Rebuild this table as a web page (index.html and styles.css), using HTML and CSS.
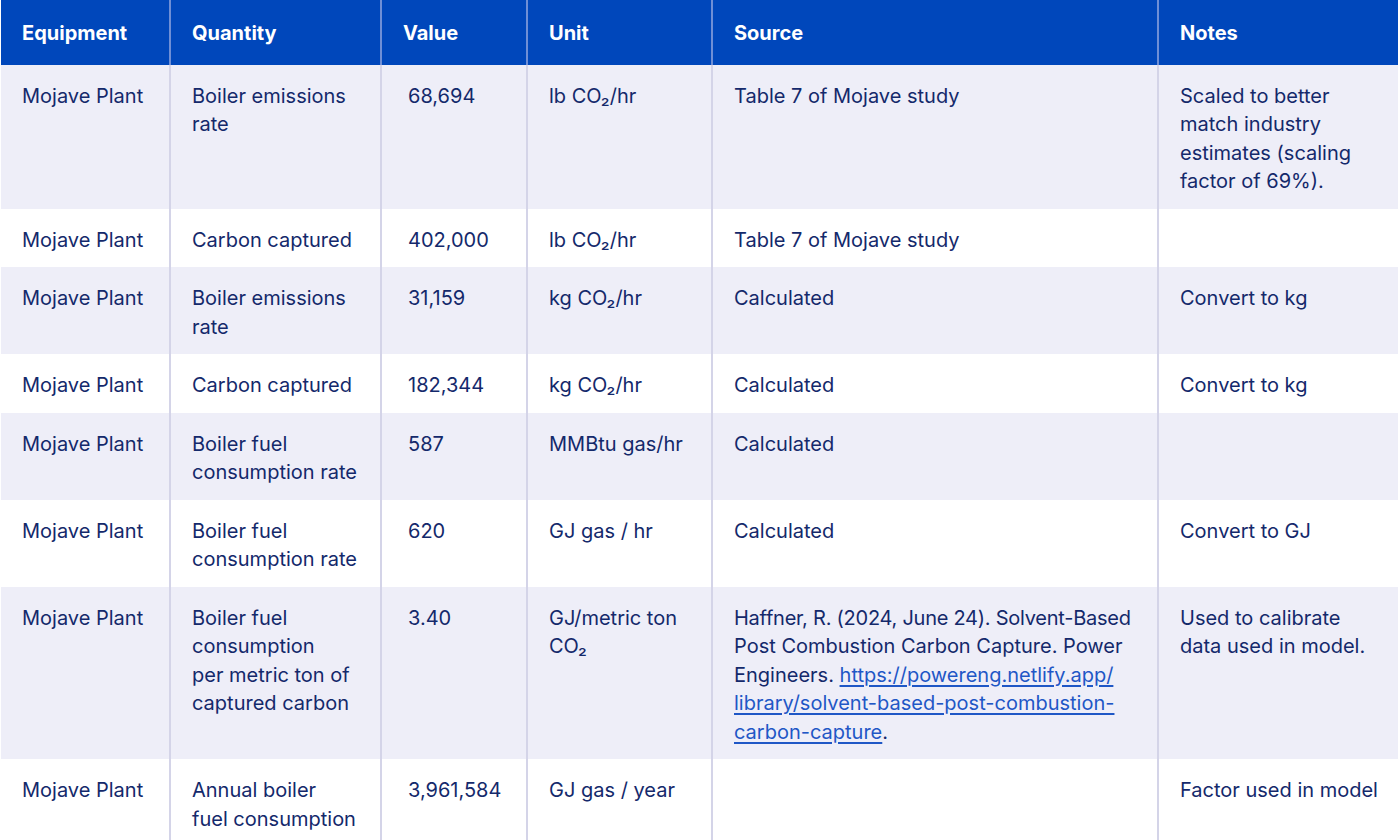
FILE: index.html
```html
<!DOCTYPE html>
<html lang="en">
<head>
<meta charset="utf-8">
<title>Mojave Plant data</title>
<link rel="stylesheet" href="styles.css">
</head>
<body>
<div class="wrap">
<table class="data">
  <colgroup>
    <col class="c1"><col class="c2"><col class="c3"><col class="c4"><col class="c5"><col class="c6">
  </colgroup>
  <thead>
    <tr><th>Equipment</th><th>Quantity</th><th>Value</th><th>Unit</th><th>Source</th><th>Notes</th></tr>
  </thead>
  <tbody>
    <tr class="alt"><td>Mojave Plant</td><td>Boiler emissions rate</td><td class="num">68,694</td><td>lb CO₂/hr</td><td>Table 7 of Mojave study</td><td>Scaled to better match industry estimates (scaling factor of 69%).</td></tr>
    <tr><td>Mojave Plant</td><td>Carbon captured</td><td class="num">402,000</td><td>lb CO₂/hr</td><td>Table 7 of Mojave study</td><td></td></tr>
    <tr class="alt"><td>Mojave Plant</td><td>Boiler emissions rate</td><td class="num">31,159</td><td>kg CO₂/hr</td><td>Calculated</td><td>Convert to kg</td></tr>
    <tr><td>Mojave Plant</td><td>Carbon captured</td><td class="num">182,344</td><td>kg CO₂/hr</td><td>Calculated</td><td>Convert to kg</td></tr>
    <tr class="alt"><td>Mojave Plant</td><td>Boiler fuel consumption rate</td><td class="num">587</td><td>MMBtu gas/hr</td><td>Calculated</td><td></td></tr>
    <tr><td>Mojave Plant</td><td>Boiler fuel consumption rate</td><td class="num">620</td><td>GJ gas / hr</td><td>Calculated</td><td>Convert to GJ</td></tr>
    <tr class="alt"><td>Mojave Plant</td><td>Boiler fuel consumption<br>per metric ton of captured carbon</td><td class="num">3.40</td><td>GJ/metric ton CO₂</td><td class="cite"><span class="ln">Haffner, R. (2024, June 24). Solvent-Based</span><br><span class="ln">Post Combustion Carbon Capture. Power</span><br><span class="ln">Engineers. <a href="#">https://powereng.netlify.app/</a></span><br><span class="ln"><a href="#">library/solvent-based-post-combustion-</a></span><br><span class="ln"><a href="#">carbon-capture</a>.</span></td><td>Used to calibrate data used in model.</td></tr>
    <tr><td>Mojave Plant</td><td>Annual boiler<br>fuel consumption</td><td class="num">3,961,584</td><td>GJ gas / year</td><td></td><td>Factor used in model</td></tr>
  </tbody>
</table>
</div>
</body>
</html>
```
FILE: styles.css
```css
html, body {
  margin: 0;
  padding: 0;
  background: #ffffff;
}
.wrap {
  padding: 0 2px 0 1px;
}
.data {
  width: 1397px;
  border-collapse: collapse;
  table-layout: fixed;
  font-family: Inter, "Liberation Sans", sans-serif;
  font-size: 20px;
  line-height: 28.5px;
  color: #14296b;
}
.c1 { width: 169px; }
.c2 { width: 211px; }
.c3 { width: 146px; }
.c4 { width: 185px; }
.c5 { width: 446px; }
.c6 { width: 240px; }
.data th {
  background: #0047bb;
  color: #ffffff;
  font-weight: 700;
  text-align: left;
  padding: 19px 20px 17px 21px;
  border-left: 2px solid #6f8fd6;
  vertical-align: middle;
}
.data th:first-child { border-left: none; }
.data td {
  text-align: left;
  vertical-align: top;
  padding: 17px 18px 13px 21px;
  border-left: 2px solid #d4d4e8;
}
.data td:first-child { border-left: none; }
.data td.num { padding-left: 26px; }
.data td.cite { padding-right: 8px; }
.data .ln { white-space: nowrap; }
.data .cite .ln:first-child { letter-spacing: -0.25px; }
.data tr.alt td { background: #eeeef8; }
.data a {
  color: #1f57c6;
  text-decoration: underline;
  text-underline-offset: 3px;
}
```
